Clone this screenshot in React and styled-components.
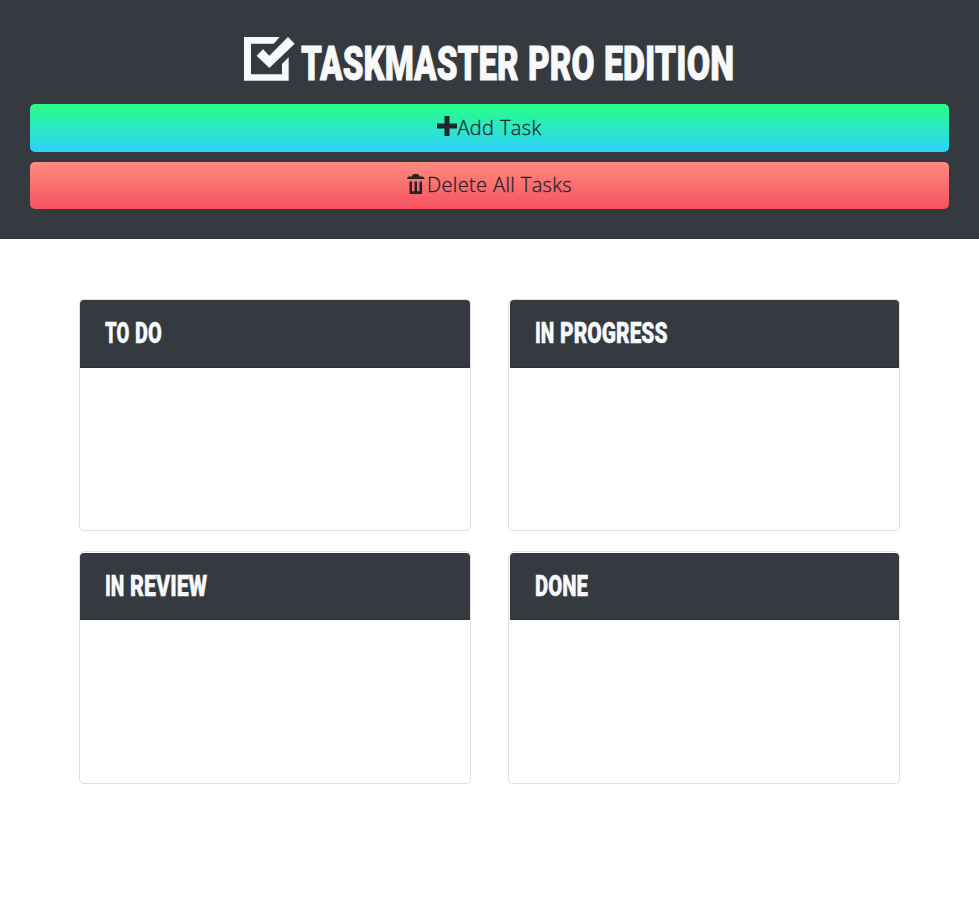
import React, { useLayoutEffect, useRef, useState } from 'react';
import styled, { createGlobalStyle } from 'styled-components';

const GlobalStyle = createGlobalStyle`
  *, *::before, *::after { box-sizing: border-box; }
  body { margin: 0; background: #fff; color: #212529; font-family: "Open Sans", sans-serif; }
`;

const Header = styled.header`
  display: flex;
  flex-direction: column;
  height: 239px;
  padding: 30px 30px 0;
  background: #353a41;
`;

const Title = styled.h1`
  display: flex;
  align-items: flex-start;
  justify-content: center;
  height: 74px;
  margin: 0;
  padding: 7px 1px 0 0;
  color: #f8f9fa;
  font: 900 47.4px/54px Roboto, sans-serif;
  -webkit-text-stroke: 0.9px currentColor;
`;

const TitleIcon = styled.svg`
  flex: none;
  width: 51px;
  height: 44px;
  margin-right: 6px;
  fill: currentColor;
`;

const TitleText = styled.span`
  display: flex;
  gap: 9px;
`;

const WordBox = styled.span`
  display: block;
  width: ${(p) => p.$width}px;
  white-space: nowrap;
`;

const WordText = styled.span`
  display: inline-block;
  transform-origin: 0 50%;
`;

const Button = styled.button`
  display: flex;
  flex: none;
  align-items: flex-start;
  justify-content: center;
  width: 100%;
  height: ${(p) => p.$height}px;
  margin: 0 0 10px;
  padding: 12px 0 0;
  border: 0;
  border-radius: 5px;
  background: linear-gradient(${(p) => p.$from}, ${(p) => p.$to});
  color: #212529;
  font: 300 20px/24px "Open Sans", sans-serif;
  letter-spacing: 0.37px;
  -webkit-text-stroke: 0.3px currentColor;
`;

const ButtonLabel = styled.span`
  margin-top: ${(p) => p.$shift}px;
`;

const ButtonIcon = styled.svg`
  width: 20px;
  height: 20px;
  fill: currentColor;
`;

const Board = styled.main`
  display: grid;
  grid-template-columns: 392px 392px;
  grid-template-rows: 232px 233px;
  gap: 20px 37px;
  padding: 60px 79px;
`;

const Card = styled.section`
  padding: ${(p) => p.$inset};
  border: 1px solid #dfdfdf;
  border-radius: 5px;
  background: #fff;
`;

const CardHeader = styled.h2`
  display: flex;
  gap: 5px;
  height: ${(p) => p.$height}px;
  margin: 0;
  padding: 16px 25px 0;
  border-bottom: 1px solid #2e3238;
  border-radius: 4px 4px 0 0;
  background: #353a41;
  color: #f8f9fa;
  font: 900 29.6px/34px Roboto, sans-serif;
  -webkit-text-stroke: 0.4px currentColor;
`;

function Word({ text, width }) {
  const ref = useRef(null);
  const [scale, setScale] = useState(1);
  useLayoutEffect(() => {
    const fit = () => setScale(width / ref.current.offsetWidth);
    fit();
    document.fonts.ready.then(fit);
  }, [width]);
  return (
    <WordBox $width={width}>
      <WordText ref={ref} style={{ transform: `scaleX(${scale})` }}>{text}</WordText>
    </WordBox>
  );
}

const titleWords = [['TASKMASTER', 218], ['PRO', 67], ['EDITION', 130]];

const lists = [
  { words: [['TO', 24.5], ['DO', 27]], inset: '0', height: 68 },
  { words: [['IN', 19.5], ['PROGRESS', 107.5]], inset: '0 0 0 1px', height: 68 },
  { words: [['IN', 19.5], ['REVIEW', 77.5]], inset: '1px 0 0', height: 67 },
  { words: [['DONE', 53]], inset: '1px 0 0 1px', height: 67 },
];

export default function App() {
  return (
    <>
      <GlobalStyle />
      <Header>
        <Title>
          <TitleIcon viewBox="0 0 153 132">
            <path d="M0 0H107L89 20H21V112H114V81L134 61V131H0Z" />
            <path d="M132 0L152 20L76 93L38 56L57 37L76 56Z" />
          </TitleIcon>
          <TitleText>
            {titleWords.map(([text, width]) => <Word key={text} text={text} width={width} />)}
          </TitleText>
        </Title>
        <Button $height={48} $from="#29ff85" $to="#2dd1ff">
          <ButtonIcon viewBox="0 0 8 8"><path d="M3 0v3h-3v2h3v3h2v-3h3v-2h-3v-3h-2z" /></ButtonIcon>
          <ButtonLabel $shift={0}>Add Task</ButtonLabel>
        </Button>
        <Button $height={47} $from="#ff8a80" $to="#f7525f">
          <ButtonIcon viewBox="0 0 8 8">
            <path d="M3 0c-.55 0-1 .45-1 1h-1c-.55 0-1 .45-1 1h7c0-.55-.45-1-1-1h-1c0-.55-.45-1-1-1h-1zm-2 3v4.81c0 .11.08.19.19.19h4.63c.11 0 .19-.08.19-.19v-4.81h-1v3.5c0 .28-.22.5-.5.5s-.5-.22-.5-.5v-3.5h-1v3.5c0 .28-.22.5-.5.5s-.5-.22-.5-.5v-3.5h-1z" />
          </ButtonIcon>
          <ButtonLabel $shift={-1}>Delete All Tasks</ButtonLabel>
        </Button>
      </Header>
      <Board>
        {lists.map(({ words, inset, height }, i) => (
          <Card key={i} $inset={inset}>
            <CardHeader $height={height}>
              {words.map(([text, width]) => <Word key={text} text={text} width={width} />)}
            </CardHeader>
          </Card>
        ))}
      </Board>
    </>
  );
}
